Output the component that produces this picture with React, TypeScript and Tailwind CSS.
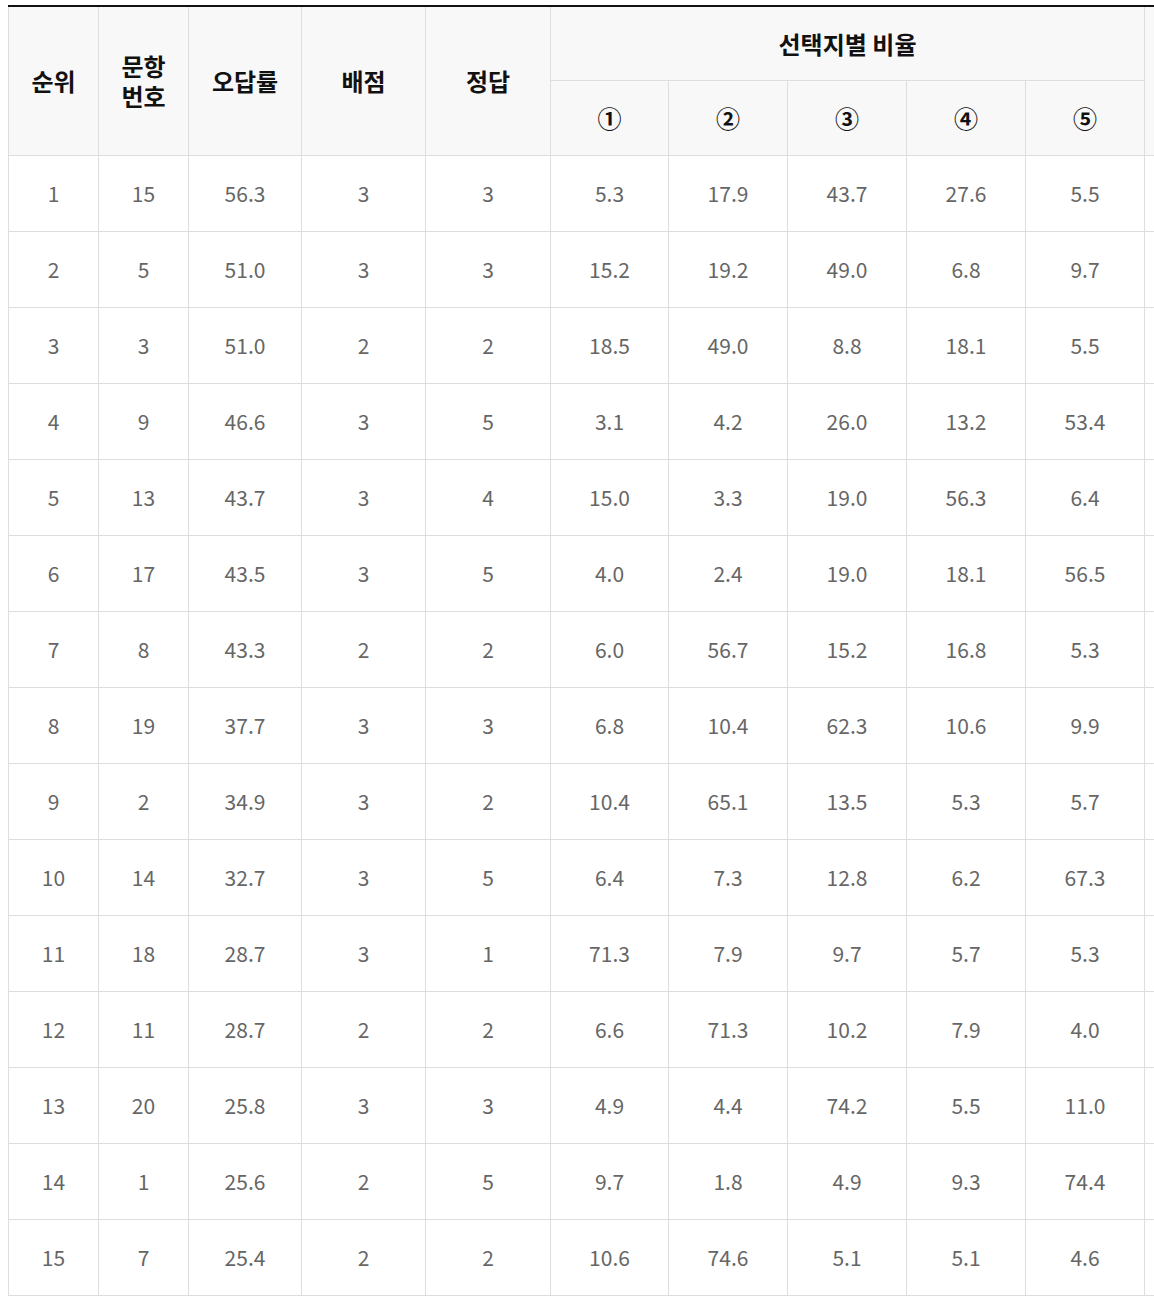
import React from "react";

type Row = string[];

const rows: Row[] = [
  ["1", "15", "56.3", "3", "3", "5.3", "17.9", "43.7", "27.6", "5.5"],
  ["2", "5", "51.0", "3", "3", "15.2", "19.2", "49.0", "6.8", "9.7"],
  ["3", "3", "51.0", "2", "2", "18.5", "49.0", "8.8", "18.1", "5.5"],
  ["4", "9", "46.6", "3", "5", "3.1", "4.2", "26.0", "13.2", "53.4"],
  ["5", "13", "43.7", "3", "4", "15.0", "3.3", "19.0", "56.3", "6.4"],
  ["6", "17", "43.5", "3", "5", "4.0", "2.4", "19.0", "18.1", "56.5"],
  ["7", "8", "43.3", "2", "2", "6.0", "56.7", "15.2", "16.8", "5.3"],
  ["8", "19", "37.7", "3", "3", "6.8", "10.4", "62.3", "10.6", "9.9"],
  ["9", "2", "34.9", "3", "2", "10.4", "65.1", "13.5", "5.3", "5.7"],
  ["10", "14", "32.7", "3", "5", "6.4", "7.3", "12.8", "6.2", "67.3"],
  ["11", "18", "28.7", "3", "1", "71.3", "7.9", "9.7", "5.7", "5.3"],
  ["12", "11", "28.7", "2", "2", "6.6", "71.3", "10.2", "7.9", "4.0"],
  ["13", "20", "25.8", "3", "3", "4.9", "4.4", "74.2", "5.5", "11.0"],
  ["14", "1", "25.6", "2", "5", "9.7", "1.8", "4.9", "9.3", "74.4"],
  ["15", "7", "25.4", "2", "2", "10.6", "74.6", "5.1", "5.1", "4.6"],
];

const choices = ["①", "②", "③", "④", "⑤"];

const headCell =
  "flex items-center justify-center border-r border-b border-[#dddddd] bg-[#f8f8f8] text-[24px] font-bold text-[#111111] text-center leading-[1.25]";

const bodyCell =
  "flex items-center justify-center border-r border-b border-[#dddddd] bg-white text-[21px] text-[#666666]";

const App = () => {
  return (
    <div
      className="w-full min-h-[1297px] overflow-hidden bg-white"
      style={{ fontFamily: '"Noto Sans CJK KR", "Noto Sans", sans-serif' }}
    >
      <div className="ml-2 mt-[5px] w-[1256px] border-t-2 border-[#111111]">
        <div className="grid grid-cols-[90px_90px_113px_124px_125px_118px_119px_119px_119px_119px_119px] grid-rows-[74px_75px] border-l border-[#dddddd]">
          <div className={`${headCell} row-span-2`}>순위</div>
          <div className={`${headCell} row-span-2`}>
            문항
            <br />
            번호
          </div>
          <div className={`${headCell} row-span-2`}>오답률</div>
          <div className={`${headCell} row-span-2`}>배점</div>
          <div className={`${headCell} row-span-2`}>정답</div>
          <div className={`${headCell} col-span-5`}>선택지별 비율</div>
          <div className={`${headCell} row-span-2`}></div>
          {choices.map((c) => (
            <div key={c} className={headCell}>
              {c}
            </div>
          ))}
        </div>
        <div className="grid grid-cols-[90px_90px_113px_124px_125px_118px_119px_119px_119px_119px_119px] auto-rows-[76px] border-l border-[#dddddd]">
          {rows.map((row, i) => (
            <React.Fragment key={i}>
              {row.map((v, j) => (
                <div key={j} className={bodyCell}>
                  {v}
                </div>
              ))}
              <div className={bodyCell}></div>
            </React.Fragment>
          ))}
        </div>
      </div>
    </div>
  );
};

export default App;
